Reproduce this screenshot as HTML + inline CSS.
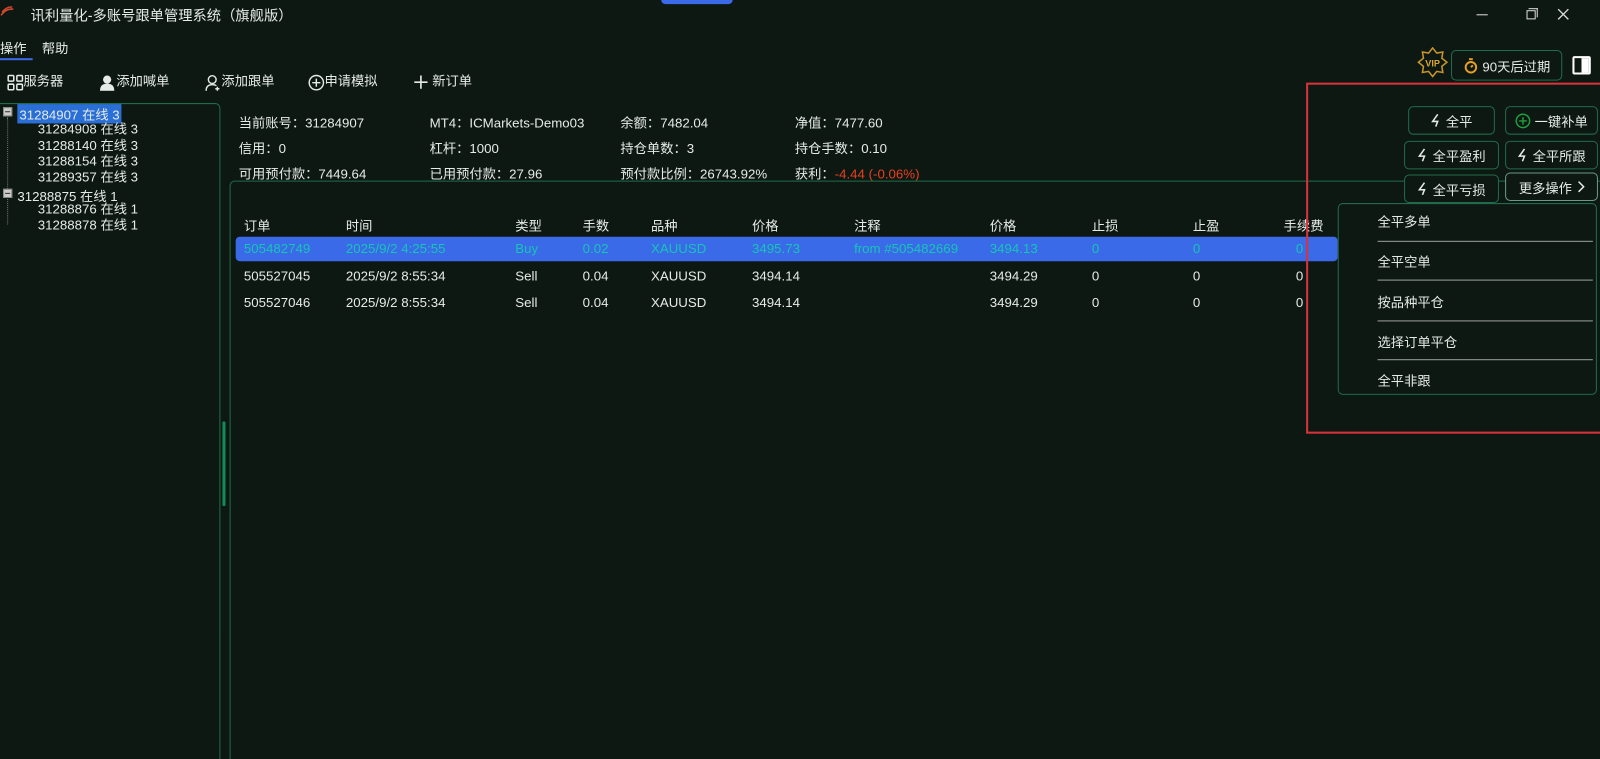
<!DOCTYPE html>
<html><head><meta charset="utf-8"><style>
*{margin:0;padding:0;box-sizing:border-box}
html,body{width:1600px;height:759px;overflow:hidden;background:#0e1813}
#w{position:absolute;left:0;top:0;width:1568px;height:744px;overflow:hidden;transform:scale(1.0204);transform-origin:0 0;color:#e6ebe8;font-family:"Liberation Sans","Noto Sans CJK SC",sans-serif;font-size:13px}
.a{position:absolute;white-space:nowrap}
.btn{position:absolute;border:1px solid #1f6b4a;border-radius:5px;height:28px;display:flex;align-items:center;justify-content:center;gap:4px;font-size:13px;color:#e6ebe8;background:#0e1813}
.menu div.i{position:absolute;left:38px;font-size:13px}
.menu div.l{position:absolute;left:38px;width:211px;height:1px;background:#9aa09c}
svg{display:inline-block;vertical-align:middle}
</style></head><body><div id="w">
<div class="a" style="left:648px;top:0;width:70px;height:4px;background:#3b6ae8;border-radius:0 0 4px 4px"></div>
<svg class="a" style="left:0;top:6px" width="14" height="12" viewBox="0 0 14 12"><path d="M1 9 Q6 2 13 3 M2 6 Q7 0 12 1" stroke="#d4472a" stroke-width="1.5" fill="none"/></svg>
<div class="a" style="left:30px;top:5px;font-size:14px">讯利量化-多账号跟单管理系统（旗舰版）</div>
<div class="a" style="left:1447px;top:14px;width:11px;height:1px;background:#ddd"></div>
<div class="a" style="left:1496px;top:10px;width:9px;height:9px;border:1px solid #ddd"></div>
<div class="a" style="left:1498px;top:8px;width:9px;height:9px;border-top:1px solid #ddd;border-right:1px solid #ddd"></div>
<svg class="a" style="left:1526px;top:8px" width="12" height="12"><path d="M1 1L11 11M11 1L1 11" stroke="#ddd" stroke-width="1.3"/></svg>
<div class="a" style="left:0;top:37px;font-size:13px">操作</div>
<div class="a" style="left:41px;top:37px;font-size:13px">帮助</div>
<div class="a" style="left:0;top:57px;width:32px;height:2px;background:#3b6ae8"></div>
<div class="a" style="left:7px;top:69px"><svg width="16" height="16" viewBox="0 0 16 16" fill="none" stroke="#e6ebe8" stroke-width="1.5"><rect x="1" y="1" width="5.5" height="5.5" rx="1"/><rect x="9.5" y="1" width="5.5" height="5.5" rx="1"/><rect x="1" y="9.5" width="5.5" height="5.5" rx="1"/><rect x="9.5" y="9.5" width="5.5" height="5.5" rx="1"/></svg>服务器</div>
<div class="a" style="left:98px;top:69px"><svg width="16" height="16" viewBox="0 0 16 16" fill="#e6ebe8"><circle cx="7" cy="5" r="4"/><path d="M0 16 Q0 9 7 9 Q14 9 14 16Z"/></svg>添加喊单</div>
<div class="a" style="left:201px;top:69px"><svg width="16" height="16" viewBox="0 0 16 16" fill="none" stroke="#e6ebe8" stroke-width="1.4"><circle cx="7" cy="5" r="3.8"/><path d="M1 16 Q1 10 7 10 Q10 10 11 11 M12 12v4M10 14h4"/></svg>添加跟单</div>
<div class="a" style="left:302px;top:69px"><svg width="16" height="16" viewBox="0 0 16 16" fill="none" stroke="#e6ebe8" stroke-width="1.4"><circle cx="8" cy="8" r="7"/><path d="M8 4v8M4 8h8"/></svg>申请模拟</div>
<div class="a" style="left:405px;top:69px"><svg width="15" height="15" viewBox="0 0 15 15" stroke="#e6ebe8" stroke-width="1.6"><path d="M7.5 1v13M1 7.5h13"/></svg> 新订单</div>
<svg class="a" style="left:1389px;top:46px" width="30" height="30" viewBox="0 0 30 30"><path d="M15 1 L19 6 L25 5 L24 11 L29 15 L24 19 L25 25 L19 24 L15 29 L11 24 L5 25 L6 19 L1 15 L6 11 L5 5 L11 6Z" fill="none" stroke="#c8962a" stroke-width="1.5"/><text x="15" y="19" text-anchor="middle" font-size="9" fill="#d8a434" font-weight="bold" font-family="Liberation Sans">VIP</text></svg>
<div class="btn" style="left:1422px;top:49px;width:109px;height:30px"><svg width="15" height="15" viewBox="0 0 16 16" fill="none" stroke="#e8a020" stroke-width="2"><circle cx="8" cy="9.5" r="5.5"/><path d="M8 9.5l2-2M6 1h4"/></svg>90天后过期</div>
<div class="a" style="left:1541px;top:55px;width:18px;height:18px;border:2px solid #fff;border-radius:2px;background:linear-gradient(90deg,transparent 50%,#fff 50%)"></div>
<div class="a" style="left:-5px;top:101px;width:221px;height:660px;border:1px solid #1f6b4a;border-radius:5px"></div>
<div class="a" style="left:3px;top:105px;width:9px;height:9px;background:#ccc;border:1px solid #888"></div>
<div class="a" style="left:5px;top:109px;width:5px;height:1px;background:#333"></div>
<div class="a" style="left:17px;top:102px;background:#2a6fd6;padding:0 2px">31284907 在线 3</div>
<div class="a" style="left:37px;top:119px;line-height:15.5px">31284908 在线 3<br>31288140 在线 3<br>31288154 在线 3<br>31289357 在线 3</div>
<div class="a" style="left:3px;top:185px;width:9px;height:9px;background:#ccc;border:1px solid #888"></div>
<div class="a" style="left:5px;top:189px;width:5px;height:1px;background:#333"></div>
<div class="a" style="left:17px;top:182px">31288875 在线 1</div>
<div class="a" style="left:37px;top:197px;line-height:15.5px">31288876 在线 1<br>31288878 在线 1</div>
<div class="a" style="left:7px;top:115px;width:1px;height:70px;border-left:1px dotted #777"></div>
<div class="a" style="left:7px;top:195px;width:1px;height:25px;border-left:1px dotted #777"></div>
<div class="a" style="left:218px;top:413px;width:3px;height:83px;background:#138a5a;border-radius:2px"></div>
<div class="a" style="left:234px;top:108px;line-height:25px">当前账号：31284907<br>信用：0<br>可用预付款：7449.64</div>
<div class="a" style="left:421px;top:108px;line-height:25px">MT4：ICMarkets-Demo03<br>杠杆：1000<br>已用预付款：27.96</div>
<div class="a" style="left:608px;top:108px;line-height:25px">余额：7482.04<br>持仓单数：3<br>预付款比例：26743.92%</div>
<div class="a" style="left:779px;top:108px;line-height:25px">净值：7477.60<br>持仓手数：0.10<br>获利：<span style="color:#e8401c">-4.44 (-0.06%)</span></div>
<div class="a" style="left:225px;top:177px;width:1400px;height:600px;border:1px solid #1f6b4a;border-radius:5px"></div>
<div class="a" style="left:231px;top:211px;width:1100px;height:24px">
<span class="a" style="left:8px">订单</span><span class="a" style="left:108px">时间</span><span class="a" style="left:274px">类型</span><span class="a" style="left:340px">手数</span><span class="a" style="left:407px">品种</span><span class="a" style="left:506px">价格</span><span class="a" style="left:606px">注释</span><span class="a" style="left:739px">价格</span><span class="a" style="left:839px">止损</span><span class="a" style="left:938px">止盈</span><span class="a" style="left:1027px">手续费</span></div>
<div class="a" style="left:231px;top:232px;width:1080px;height:24px;background:#3b6ae8;border-radius:4px;color:#15c6b5">
<span class="a" style="left:8px;top:4px">505482749</span><span class="a" style="left:108px;top:4px">2025/9/2 4:25:55</span><span class="a" style="left:274px;top:4px">Buy</span><span class="a" style="left:340px;top:4px">0.02</span><span class="a" style="left:407px;top:4px">XAUUSD</span><span class="a" style="left:506px;top:4px">3495.73</span><span class="a" style="left:606px;top:4px">from #505482669</span><span class="a" style="left:739px;top:4px">3494.13</span><span class="a" style="left:839px;top:4px">0</span><span class="a" style="left:938px;top:4px">0</span><span class="a" style="left:1039px;top:4px">0</span></div>
<div class="a" style="left:231px;top:259px;width:1100px;height:24px">
<span class="a" style="left:8px;top:4px">505527045</span><span class="a" style="left:108px;top:4px">2025/9/2 8:55:34</span><span class="a" style="left:274px;top:4px">Sell</span><span class="a" style="left:340px;top:4px">0.04</span><span class="a" style="left:407px;top:4px">XAUUSD</span><span class="a" style="left:506px;top:4px">3494.14</span><span class="a" style="left:739px;top:4px">3494.29</span><span class="a" style="left:839px;top:4px">0</span><span class="a" style="left:938px;top:4px">0</span><span class="a" style="left:1039px;top:4px">0</span></div>
<div class="a" style="left:231px;top:285px;width:1100px;height:24px">
<span class="a" style="left:8px;top:4px">505527046</span><span class="a" style="left:108px;top:4px">2025/9/2 8:55:34</span><span class="a" style="left:274px;top:4px">Sell</span><span class="a" style="left:340px;top:4px">0.04</span><span class="a" style="left:407px;top:4px">XAUUSD</span><span class="a" style="left:506px;top:4px">3494.14</span><span class="a" style="left:739px;top:4px">3494.29</span><span class="a" style="left:839px;top:4px">0</span><span class="a" style="left:938px;top:4px">0</span><span class="a" style="left:1039px;top:4px">0</span></div>
<div class="a" style="left:1280px;top:81px;width:300px;height:344px;border:2px solid #d8333a"></div>
<div class="btn" style="left:1380px;top:104px;width:85px"><svg width="11" height="14" viewBox="0 0 11 14" fill="none" stroke="#e6ebe8" stroke-width="1.5"><path d="M7 1L2 8h5l-2 5"/></svg> 全平</div>
<div class="btn" style="left:1475px;top:104px;width:91px"><svg width="15" height="15" viewBox="0 0 16 16" fill="none" stroke="#1fa03c" stroke-width="1.5"><circle cx="8" cy="8" r="7"/><path d="M8 4v8M4 8h8"/></svg>一键补单</div>
<div class="btn" style="left:1376px;top:138px;width:93px"><svg width="11" height="14" viewBox="0 0 11 14" fill="none" stroke="#e6ebe8" stroke-width="1.5"><path d="M7 1L2 8h5l-2 5"/></svg> 全平盈利</div>
<div class="btn" style="left:1475px;top:138px;width:91px"><svg width="11" height="14" viewBox="0 0 11 14" fill="none" stroke="#e6ebe8" stroke-width="1.5"><path d="M7 1L2 8h5l-2 5"/></svg> 全平所跟</div>
<div class="btn" style="left:1376px;top:171px;width:93px"><svg width="11" height="14" viewBox="0 0 11 14" fill="none" stroke="#e6ebe8" stroke-width="1.5"><path d="M7 1L2 8h5l-2 5"/></svg> 全平亏损</div>
<div class="btn" style="left:1475px;top:169px;width:91px;border-color:#6a9a86">更多操作 <svg width="8" height="12"><path d="M2 1l5 5-5 5" stroke="#e6ebe8" stroke-width="1.5" fill="none"/></svg></div>
<div class="a menu" style="left:1311px;top:199px;width:254px;height:188px;border:1px solid #1f6b4a;border-radius:5px;background:#0e1813">
<div class="i" style="top:7px">全平多单</div><div class="l" style="top:36px"></div>
<div class="i" style="top:46px">全平空单</div><div class="l" style="top:74px"></div>
<div class="i" style="top:86px">按品种平仓</div><div class="l" style="top:114px"></div>
<div class="i" style="top:125px">选择订单平仓</div><div class="l" style="top:152px"></div>
<div class="i" style="top:163px">全平非跟</div>
</div>
</div></body></html>
